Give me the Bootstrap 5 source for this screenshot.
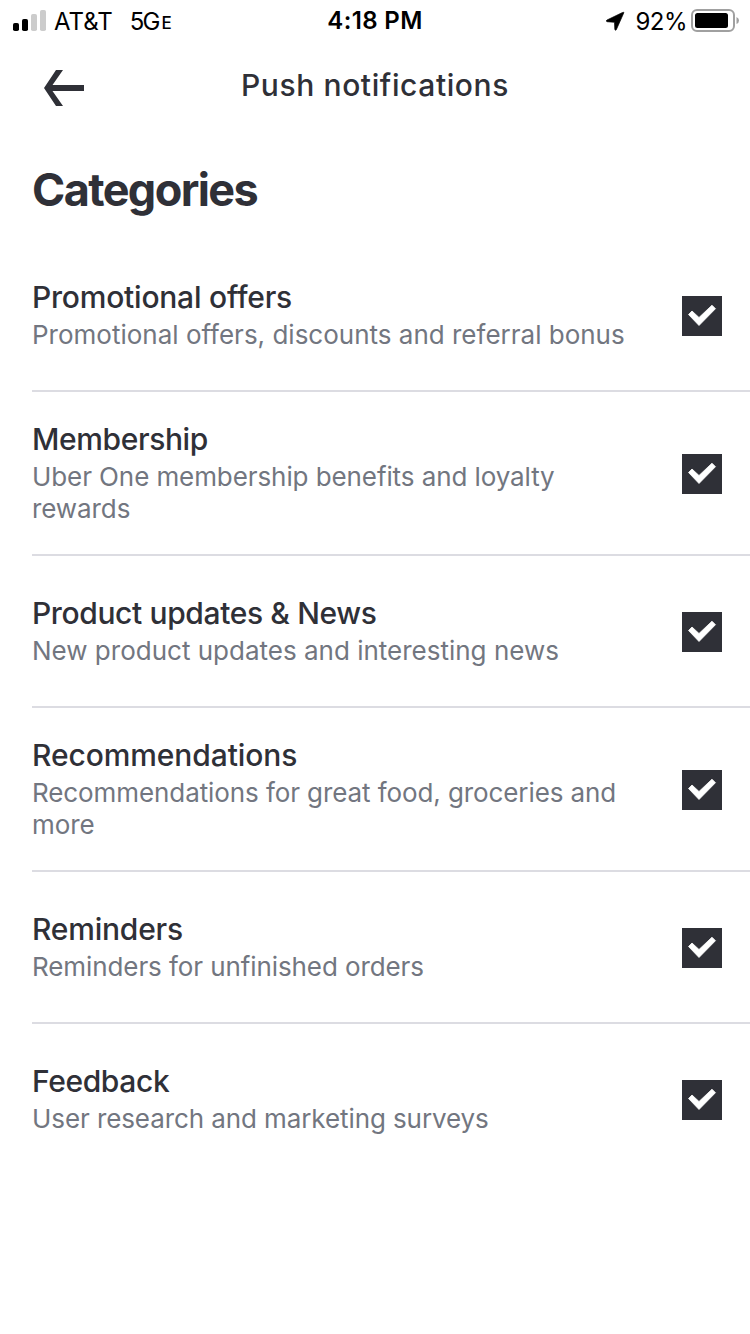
<!DOCTYPE html>
<html lang="en">
<head>
<meta charset="utf-8">
<meta name="viewport" content="width=device-width, initial-scale=1">
<title>Push notifications</title>
<link href="https://cdn.jsdelivr.net/npm/bootstrap@5.3.0/dist/css/bootstrap.min.css" rel="stylesheet">
<style>
:root{--ink:#2f3037;--muted:#727680;--rule:#dcdce2}
body{font-family:Inter,"Liberation Sans",sans-serif;color:var(--ink);background:#fff}
.status-bar{height:40px;font-size:24px;line-height:40px;color:#000;padding:0 11px 0 13px;display:grid;grid-template-columns:1fr auto 1fr}
.status-bar svg{flex:none}
.signal{margin-top:-2px}
.carrier{margin-left:8px}
.network{margin-left:17px;letter-spacing:-1.9px}
.network-suffix{font-size:17px;font-weight:500;margin-left:3px;padding-top:3px}
.clock{font-weight:600;letter-spacing:.35px;padding:1px 2px 0 0}
.locator{margin-top:-1px}
.battery{margin-top:-1px}
.charge{margin:0 4px 0 10px;letter-spacing:-.5px}
.app-bar{height:90px;display:grid;grid-template-columns:1fr auto 1fr;padding:0 43px}
.back-btn{width:42px;height:38px;margin-top:29px;line-height:0}
.bar-title{font-size:30px;font-weight:500;line-height:40px;letter-spacing:.6px;margin:25px 0 0}
.section-title{font-size:45px;font-weight:700;line-height:56px;letter-spacing:-1.6px;margin:32px 0 22px 32px}
.category{min-height:152px;padding:31px 28px 31px 0;cursor:pointer}
.category:not(:last-child){box-shadow:inset 0 -2px var(--rule)}
.category-text{width:610px}
.category-name{font-size:30px;font-weight:500;line-height:38px;letter-spacing:-.1px;position:relative;top:-3px}
.category-note{font-size:26px;line-height:32px;letter-spacing:-.09px;color:var(--muted)}
.name-snug{letter-spacing:-.22px}
.name-tight{letter-spacing:-.38px}
.note-open{letter-spacing:0}
.tick-box{width:40px;height:40px;flex:none;background:#fff;border:3px solid var(--ink)}
.tick-box svg{display:none;margin:-3px}
.btn-check:checked+.tick-box{background:var(--ink)}
.btn-check:checked+.tick-box svg{display:block}
</style>
</head>
<body>
<svg class="d-none"><symbol id="check" viewBox="0 0 40 40"><path d="M6.500 18.500 10 15 17 21.500 30 9.200 33.500 12.700 17 29.500Z" fill="#fff" stroke="#fff" stroke-width=".8" stroke-linejoin="round"/></symbol></svg>
<div class="status-bar">
  <div class="d-flex align-items-center">
    <svg class="signal" width="33" height="22" viewBox="0 0 33 22"><rect y="13" width="6" height="8" rx="1.8"/><rect x="9" y="9" width="6" height="12" rx="1.8"/><g fill="#ccc"><rect x="18" y="4" width="6" height="17" rx="1.8"/><rect x="27" y="0" width="6" height="21" rx="1.8"/></g></svg>
    <span class="carrier">AT&amp;T</span><span class="network">5G</span><span class="network-suffix">E</span>
  </div>
  <div class="clock">4:18 PM</div>
  <div class="d-flex align-items-center justify-content-end">
    <svg class="locator" width="20" height="20" viewBox="0 0 20 20"><path d="M18.800 1.800 11.300 18.700Q10.300 20 9.800 18.300L9.500 11.300 2 10.700Q.4 10 2 9L17.500 1.500Q19.200.8 18.800 1.800Z" stroke="#000" stroke-width=".7" stroke-linejoin="round"/></svg>
    <span class="charge">92%</span>
    <svg class="battery" width="48" height="24" viewBox="0 0 48 24"><rect x="1" y="1" width="42" height="21" rx="5" fill="none" stroke="#a0a0a0" stroke-width="2"/><rect x="4" y="4" width="33" height="15" rx="2.500"/><path d="M45.500 8Q48 9 48 11.500T45.500 15Z" fill="#a0a0a0"/></svg>
  </div>
</div>
<header class="app-bar">
  <button class="btn back-btn p-0 border-0 rounded-0" type="button" aria-label="Back"><svg width="42" height="38" viewBox="0 0 42 38"><path d="M41 16V22H9.500L20 37H13L1 19 13 1H20L9.500 16Z" fill="#2f3037"/></svg></button>
  <h1 class="bar-title">Push notifications</h1>
</header>
<main>
  <h2 class="section-title">Categories</h2>
  <div class="ms-4 ps-2">
    <label class="category d-flex align-items-center justify-content-between">
      <span class="category-text"><span class="category-name name-snug d-block">Promotional offers</span><span class="category-note note-open d-block">Promotional offers, discounts and referral bonus</span></span>
      <input class="btn-check" type="checkbox" checked><span class="tick-box"><svg width="40" height="40"><use href="#check"/></svg></span>
    </label>
    <label class="category d-flex align-items-center justify-content-between">
      <span class="category-text"><span class="category-name name-tight d-block">Membership</span><span class="category-note d-block">Uber One membership benefits and loyalty<br>rewards</span></span>
      <input class="btn-check" type="checkbox" checked><span class="tick-box"><svg width="40" height="40"><use href="#check"/></svg></span>
    </label>
    <label class="category d-flex align-items-center justify-content-between">
      <span class="category-text"><span class="category-name name-tight d-block">Product updates &amp; News</span><span class="category-note note-open d-block">New product updates and interesting news</span></span>
      <input class="btn-check" type="checkbox" checked><span class="tick-box"><svg width="40" height="40"><use href="#check"/></svg></span>
    </label>
    <label class="category d-flex align-items-center justify-content-between">
      <span class="category-text"><span class="category-name d-block">Recommendations</span><span class="category-note d-block">Recommendations for great food, groceries and<br>more</span></span>
      <input class="btn-check" type="checkbox" checked><span class="tick-box"><svg width="40" height="40"><use href="#check"/></svg></span>
    </label>
    <label class="category d-flex align-items-center justify-content-between">
      <span class="category-text"><span class="category-name name-snug d-block">Reminders</span><span class="category-note d-block">Reminders for unfinished orders</span></span>
      <input class="btn-check" type="checkbox" checked><span class="tick-box"><svg width="40" height="40"><use href="#check"/></svg></span>
    </label>
    <label class="category d-flex align-items-center justify-content-between">
      <span class="category-text"><span class="category-name name-tight d-block">Feedback</span><span class="category-note d-block">User research and marketing surveys</span></span>
      <input class="btn-check" type="checkbox" checked><span class="tick-box"><svg width="40" height="40"><use href="#check"/></svg></span>
    </label>
  </div>
</main>
<script src="https://cdn.jsdelivr.net/npm/bootstrap@5.3.0/dist/js/bootstrap.bundle.min.js"></script>
</body>
</html>
